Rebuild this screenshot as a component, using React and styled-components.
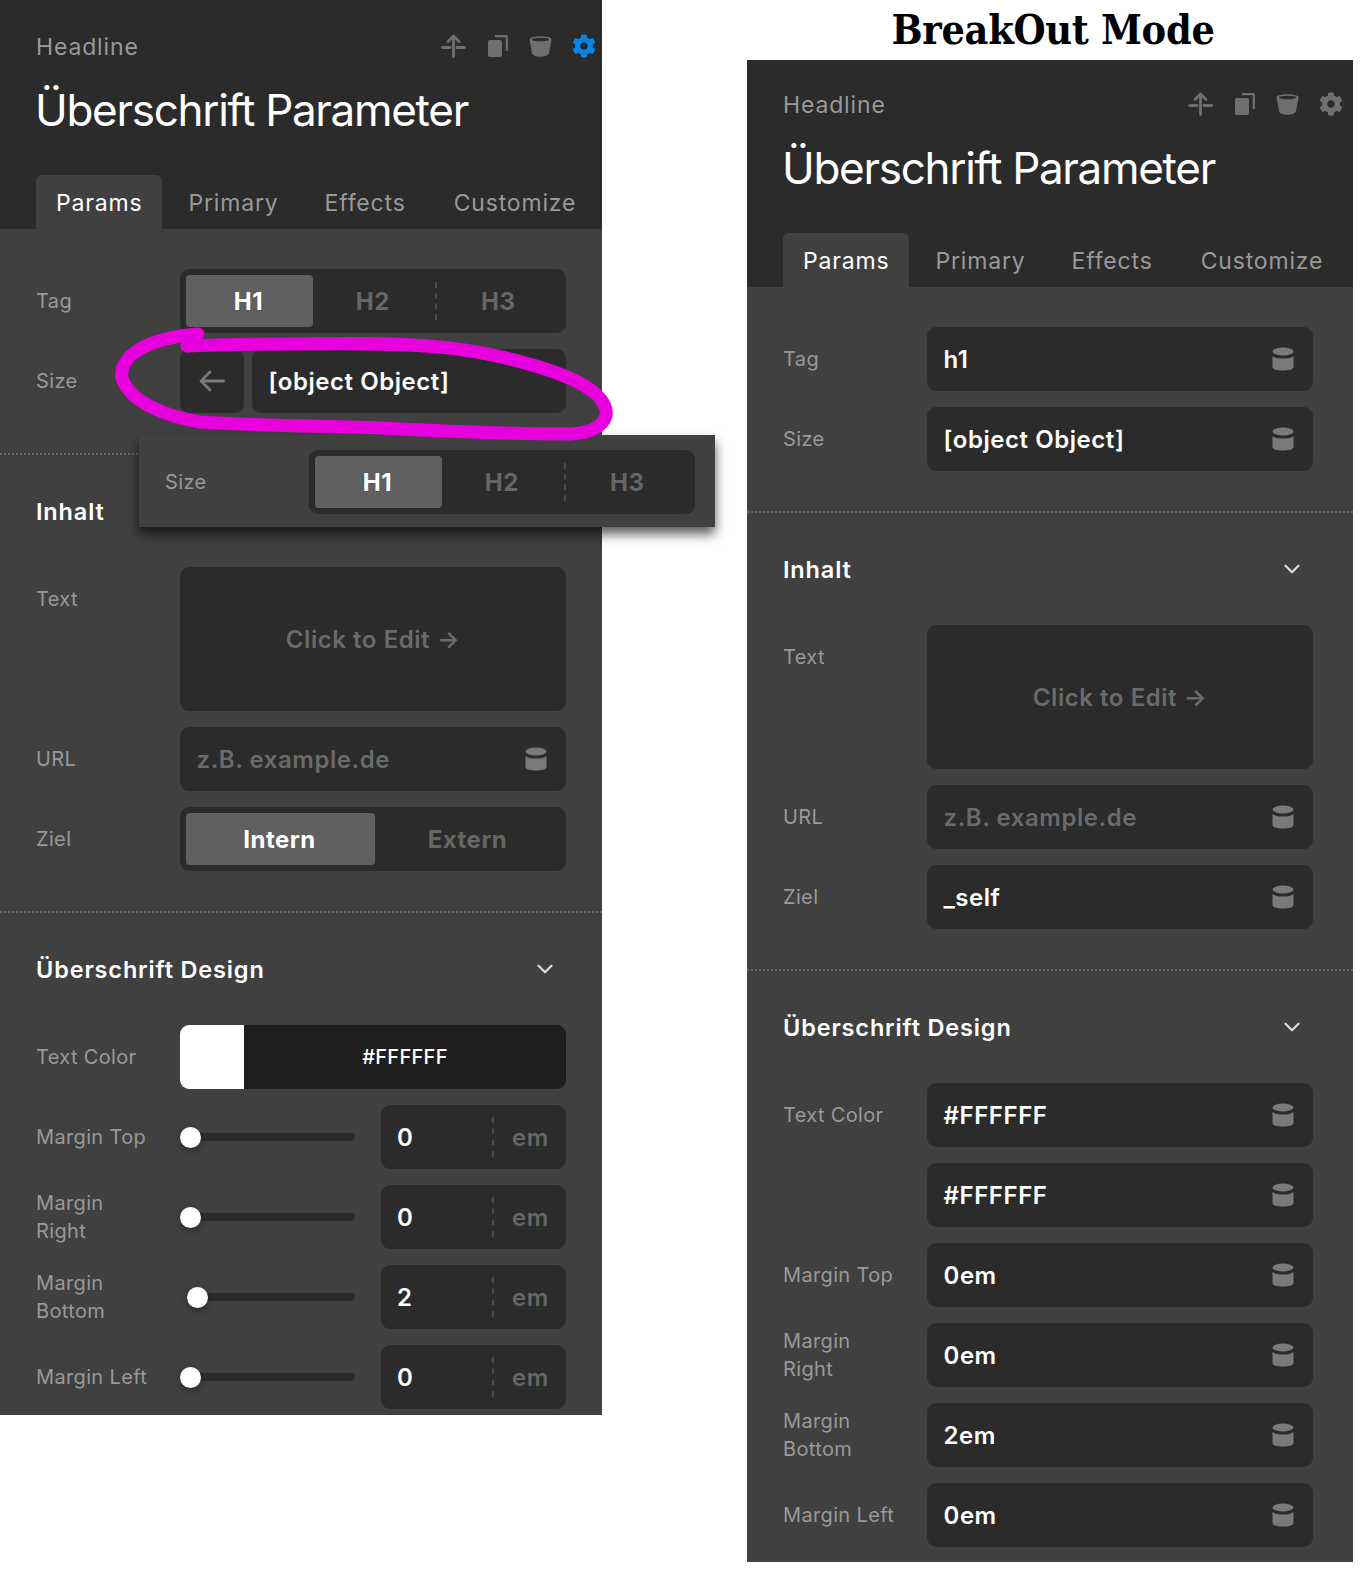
import React from 'react'
import styled, { createGlobalStyle } from 'styled-components'
import { ChevronDown } from 'lucide-react'
import { FaCog } from 'react-icons/fa'

const GlobalStyle = createGlobalStyle`
  html, body { margin: 0; padding: 0; background: #fff; }
  body { font-family: Inter, "Liberation Sans", sans-serif; }
`

const SplitIcon = () => (
  <svg width="27" height="24" viewBox="0 0 27 24" fill="none" stroke="currentColor" strokeWidth="2.8" strokeLinecap="round" strokeLinejoin="round">
    <path d="M12.500 22.500V2M7 7.500L12.500 2 18 7.500" />
    <path d="M1.500 13.500H9M16 13.500h7.500" />
  </svg>
)

const CopyIcon = () => (
  <svg width="21" height="22" viewBox="0 0 21 22">
    <rect x="0" y="5" width="14" height="17" rx="2" fill="currentColor" />
    <path d="M7 1.200h11.800V16" fill="none" stroke="currentColor" strokeWidth="2.200" strokeLinejoin="round" />
  </svg>
)

const BucketIcon = () => (
  <svg width="23" height="22" viewBox="0 0 23 22">
    <path d="M.5 4.500C.5.200 22.500.200 22.500 4.500L20 18c-.5 5-16.500 5-17 0Z" fill="currentColor" />
    <ellipse cx="11.500" cy="4.500" rx="8.600" ry="1.800" fill="#2b2b2b" />
  </svg>
)

const DbIcon = () => (
  <svg width="22" height="24" viewBox="0 0 22 24" fill="currentColor">
    <ellipse cx="11" cy="4.500" rx="10.500" ry="4" />
    <path d="M.5 9c2.500 3.400 18.500 3.400 21 0v11c0 4.800-21 4.800-21 0Z" />
  </svg>
)

const BackArrow = () => (
  <svg width="26" height="22" viewBox="0 0 26 22" fill="none" stroke="currentColor" strokeWidth="2.800" strokeLinecap="round" strokeLinejoin="round">
    <path d="M24.500 11H2M11 2l-9 9 9 9" />
  </svg>
)

const Page = styled.div`
  position: relative;
  width: 1366px;
  height: 1577px;
  display: flex;
  align-items: flex-start;
  overflow: hidden;
`

const Panel = styled.div`
  flex: none;
  width: ${p => p.$width}px;
  height: ${p => p.$height}px;
  background: #404040;
  overflow: hidden;
`

const RightColumn = styled.div`
  flex: none;
  width: 606px;
  margin-left: 145px;
`

const ModeTitle = styled.h1`
  margin: 0;
  height: 60px;
  padding-left: 6px;
  line-height: 60px;
  text-align: center;
  font-family: "DejaVu Serif", "Liberation Serif", serif;
  font-stretch: condensed;
  font-size: 41px;
  font-weight: 700;
  color: #000;
  letter-spacing: -0.3px;
`

const Header = styled.div`
  height: ${p => p.$height}px;
  box-sizing: border-box;
  padding: ${p => p.$top}px 0 0 36px;
  background: #2b2b2b;
  display: flex;
  flex-direction: column;
`

const HeaderTop = styled.div`
  display: flex;
  align-items: center;
  justify-content: space-between;
  height: 32px;
`

const Kicker = styled.div`
  font-size: 23px;
  letter-spacing: 0.85px;
  color: #999;
`

const ToolIcons = styled.div`
  display: flex;
  align-items: center;
  gap: 20px;
  margin-right: ${p => p.$right}px;
  margin-bottom: 2px;
  color: #6f6f6f;
`

const GearWrap = styled.span`
  display: flex;
  color: ${p => (p.$active ? '#0a84e6' : '#6f6f6f')};
`

const Title = styled.div`
  margin: 17px 0 0 -1px;
  font-size: 44px;
  line-height: 60px;
  font-weight: 400;
  color: #fff;
  letter-spacing: -1.3px;
`

const Tabs = styled.div`
  display: flex;
  margin-top: auto;
`

const Tab = styled.div`
  height: 54px;
  line-height: 56px;
  padding: 0 ${p => p.$pad}px;
  border-radius: 6px 6px 0 0;
  font-size: 23px;
  letter-spacing: 0.83px;
  color: ${p => (p.$active ? '#fff' : '#999')};
  background: ${p => (p.$active ? '#404040' : 'transparent')};
`

const Section = styled.div`
  padding: 40px ${p => p.$right}px 40px 36px;
  border-bottom: ${p => (p.$last ? 'none' : '2px dotted #666')};
  display: flex;
  flex-direction: column;
  gap: 16px;
`

const SectionHead = styled.div`
  display: flex;
  align-items: center;
  justify-content: space-between;
  height: 32px;
  margin-bottom: 24px;
  font-size: 23.500px;
  font-weight: 600;
  letter-spacing: 0.85px;
  color: #fff;
  svg { color: #ddd; margin-right: 8px; }
`

const Row = styled.div`
  display: grid;
  grid-template-columns: 144px 1fr;
  align-items: ${p => (p.$top ? 'start' : 'center')};
  min-height: 64px;
`

const Label = styled.div`
  font-size: 20px;
  line-height: 28px;
  letter-spacing: 0.35px;
  color: #999;
  padding-right: 26px;
  padding-top: ${p => (p.$top ? '18px' : '0')};
`

const Field = styled.div`
  height: 64px;
  box-sizing: border-box;
  padding: 0 19px 0 16.500px;
  border-radius: 9px;
  background: #2b2b2b;
  display: flex;
  align-items: center;
  justify-content: space-between;
  font-size: 24px;
  font-weight: 600;
  letter-spacing: 0.55px;
  color: ${p => (p.$muted ? '#6a6a6a' : '#fff')};
  svg { color: #7a7a7a; flex: none; }
`

const EditBox = styled.div`
  height: 144px;
  border-radius: 9px;
  background: #2b2b2b;
  display: flex;
  align-items: center;
  justify-content: center;
  font-size: 24px;
  font-weight: 600;
  letter-spacing: 0.55px;
  color: #6a6a6a;
`

const Segmented = styled.div`
  height: 64px;
  box-sizing: border-box;
  padding: 6px;
  border-radius: 9px;
  background: #2b2b2b;
  display: grid;
  grid-template-columns: ${p => p.$columns};
`

const Segment = styled.div`
  position: relative;
  border-radius: 4px;
  display: flex;
  align-items: center;
  justify-content: center;
  font-size: 24px;
  font-weight: 700;
  letter-spacing: 0.5px;
  padding-right: ${p => (p.$dash ? '4px' : p.$active ? '2px' : '0')};
  color: ${p => (p.$active ? '#fff' : '#666')};
  background: ${p => (p.$active ? '#606060' : 'transparent')};
  ${p => p.$dash && `
    &::after {
      content: '';
      position: absolute;
      right: 0;
      top: 7px;
      bottom: 7px;
      border-right: 2px dashed #4a4a4a;
    }
  `}
`

const BackRow = styled.div`
  display: grid;
  grid-template-columns: 64px 1fr;
  gap: 8px;
`

const BackButton = styled.div`
  height: 64px;
  border-radius: 9px;
  background: #2b2b2b;
  display: flex;
  align-items: center;
  justify-content: center;
  color: #7a7a7a;
`

const ColorField = styled.div`
  height: 64px;
  border-radius: 9px;
  overflow: hidden;
  background: #1e1e1e;
  display: grid;
  grid-template-columns: 64px 1fr;
`

const Swatch = styled.div`
  background: #fff;
`

const HexText = styled.div`
  display: flex;
  align-items: center;
  justify-content: center;
  font-size: 20px;
  font-weight: 500;
  letter-spacing: 0.3px;
  color: #fff;
`

const SliderRow = styled.div`
  display: grid;
  grid-template-columns: 175px 185px;
  justify-content: space-between;
  align-items: center;
`

const Track = styled.div`
  position: relative;
  height: 8px;
  margin-left: ${p => p.$offset}px;
  border-radius: 4px;
  background: #2b2b2b;
`

const Thumb = styled.div`
  position: absolute;
  top: -6px;
  left: 0;
  width: 21px;
  height: 21px;
  border-radius: 50%;
  background: #fff;
  box-shadow: 0 3px 6px rgba(0, 0, 0, 0.35);
`

const NumberField = styled.div`
  height: 64px;
  border-radius: 9px;
  background: #2b2b2b;
  display: grid;
  grid-template-columns: 111px 1fr;
  align-items: center;
`

const NumberValue = styled.div`
  padding-left: 16px;
  font-size: 24px;
  font-weight: 600;
  color: #fff;
`

const Unit = styled.div`
  height: 40px;
  border-left: 2px dashed #4a4a4a;
  display: flex;
  align-items: center;
  padding-left: 18px;
  font-size: 24px;
  font-weight: 600;
  letter-spacing: 0.6px;
  color: #666;
`

const Popover = styled.div`
  position: absolute;
  left: 139px;
  top: 435px;
  width: 576px;
  height: 92px;
  box-sizing: border-box;
  padding: 15px 20px 0 26px;
  background: #404040;
  box-shadow: 0 7px 11px rgba(0, 0, 0, 0.65);
  display: grid;
  grid-template-columns: 144px 1fr;
  align-items: start;
`

const PopoverLabel = styled(Label)`
  line-height: 64px;
`

const Scribble = styled.svg`
  position: absolute;
  left: 0;
  top: 0;
  pointer-events: none;
`

function PanelHeader({ height, top, iconRight, gearActive }) {
  return (
    <Header $height={height} $top={top}>
      <HeaderTop>
        <Kicker>Headline</Kicker>
        <ToolIcons $right={iconRight}>
          <SplitIcon />
          <CopyIcon />
          <BucketIcon />
          <GearWrap $active={gearActive}><FaCog size={24} /></GearWrap>
        </ToolIcons>
      </HeaderTop>
      <Title>Überschrift Parameter</Title>
      <Tabs>
        <Tab $active $pad={20}>Params</Tab>
        <Tab $pad={26}>Primary</Tab>
        <Tab $pad={20}>Effects</Tab>
        <Tab $pad={28}>Customize</Tab>
      </Tabs>
    </Header>
  )
}

function SegmentedControl({ items }) {
  const columns = items.length === 3 ? '127px 1fr 1fr' : '189px 1fr'
  return (
    <Segmented $columns={columns}>
      {items.map((item, i) => (
        <Segment key={item} $active={i === 0} $dash={i === 1 && items.length === 3}>{item}</Segment>
      ))}
    </Segmented>
  )
}

function DbField({ value, muted }) {
  return (
    <Field $muted={muted}>
      {value}
      <DbIcon />
    </Field>
  )
}

function Slider({ value, offset }) {
  return (
    <SliderRow>
      <Track $offset={offset}><Thumb /></Track>
      <NumberField>
        <NumberValue>{value}</NumberValue>
        <Unit>em</Unit>
      </NumberField>
    </SliderRow>
  )
}

const margins = [
  { label: 'Margin Top', value: '0', offset: 0 },
  { label: 'Margin Right', value: '0', offset: 0 },
  { label: 'Margin Bottom', value: '2', offset: 7 },
  { label: 'Margin Left', value: '0', offset: 0 },
]

export default function App() {
  return (
    <Page>
      <GlobalStyle />
      <Panel $width={602} $height={1415}>
        <PanelHeader height={229} top={31} iconRight={6} gearActive />
        <Section $right={36}>
          <Row>
            <Label>Tag</Label>
            <SegmentedControl items={['H1', 'H2', 'H3']} />
          </Row>
          <Row>
            <Label>Size</Label>
            <BackRow>
              <BackButton><BackArrow /></BackButton>
              <Field>[object Object]</Field>
            </BackRow>
          </Row>
        </Section>
        <Section $right={36}>
          <SectionHead>Inhalt<ChevronDown size={26} /></SectionHead>
          <Row $top>
            <Label $top>Text</Label>
            <EditBox>Click to Edit →</EditBox>
          </Row>
          <Row>
            <Label>URL</Label>
            <DbField value="z.B. example.de" muted />
          </Row>
          <Row>
            <Label>Ziel</Label>
            <SegmentedControl items={['Intern', 'Extern']} />
          </Row>
        </Section>
        <Section $right={36} $last>
          <SectionHead>Überschrift Design<ChevronDown size={26} /></SectionHead>
          <Row>
            <Label>Text Color</Label>
            <ColorField>
              <Swatch />
              <HexText>#FFFFFF</HexText>
            </ColorField>
          </Row>
          {margins.map(m => (
            <Row key={m.label}>
              <Label>{m.label}</Label>
              <Slider value={m.value} offset={m.offset} />
            </Row>
          ))}
        </Section>
      </Panel>

      <RightColumn>
        <ModeTitle>BreakOut Mode</ModeTitle>
        <Panel $width={606} $height={1502}>
          <PanelHeader height={227} top={29} iconRight={10} />
          <Section $right={40}>
            <Row><Label>Tag</Label><DbField value="h1" /></Row>
            <Row><Label>Size</Label><DbField value="[object Object]" /></Row>
          </Section>
          <Section $right={40}>
            <SectionHead>Inhalt<ChevronDown size={26} /></SectionHead>
            <Row $top>
              <Label $top>Text</Label>
              <EditBox>Click to Edit →</EditBox>
            </Row>
            <Row><Label>URL</Label><DbField value="z.B. example.de" muted /></Row>
            <Row><Label>Ziel</Label><DbField value="_self" /></Row>
          </Section>
          <Section $right={40} $last>
            <SectionHead>Überschrift Design<ChevronDown size={26} /></SectionHead>
            <Row><Label>Text Color</Label><DbField value="#FFFFFF" /></Row>
            <Row><Label /><DbField value="#FFFFFF" /></Row>
            {margins.map(m => (
              <Row key={m.label}>
                <Label>{m.label}</Label>
                <DbField value={`${m.value}em`} />
              </Row>
            ))}
          </Section>
        </Panel>
      </RightColumn>

      <Popover>
        <PopoverLabel>Size</PopoverLabel>
        <SegmentedControl items={['H1', 'H2', 'H3']} />
      </Popover>

      <Scribble width="1366" height="1577" viewBox="0 0 1366 1577" fill="none">
        <path
          d="M187 346C220 344 262 344 300 344C360 343 420 343 464 350C500 355 550 368 578 382C600 394 608 405 606 416C602 428 590 433 570 434C500 434 440 431 381 428C330 426 262 426 200 422C165 416 130 402 122 378C120 366 128 356 140 349C155 340 175 336 198 334"
          stroke="#e900de"
          strokeWidth="13"
          strokeLinecap="round"
          strokeLinejoin="round"
        />
      </Scribble>
    </Page>
  )
}
